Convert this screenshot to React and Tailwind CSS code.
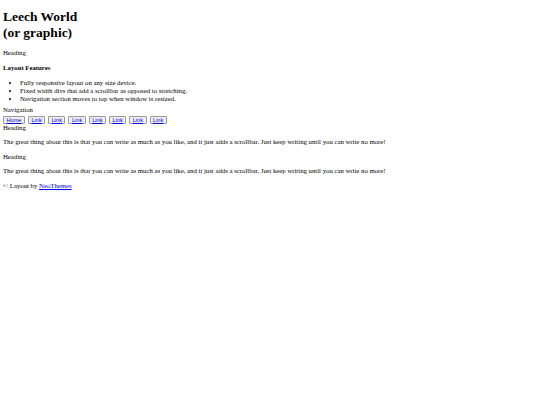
import React from "react";

function NavButton({ label }) {
  return (
    <span className="inline-flex items-center justify-center h-[8px] px-[2.5px] bg-[#efefef] border border-[#9a9a9a] rounded-[1px] font-['Liberation_Sans',sans-serif] text-[5.6px] leading-[6px]">
      <a href="#" className="text-[#0000ee] underline">{label}</a>
    </span>
  );
}

export default function App() {
  const text =
    "The great thing about this is that you can write as much as you like, and it just adds a scrollbar. Just keep writing until you can write no more!";
  return (
    <div className="min-h-[405px] bg-white p-[3px] font-['Liberation_Serif',serif] text-[6.75px] leading-[8px] text-black">
      <h1 className="mt-[6px] mb-[8px] text-[13.5px] leading-[16px] font-bold">
        Leech World
        <br />
        (or graphic)
      </h1>
      <div>Heading</div>
      <p className="mt-[7px] font-bold">Layout Features</p>
      <ul className="mt-[7px] list-disc pl-[17px]">
        <li className="leading-[8px]">Fully responsive layout on any size device.</li>
        <li className="leading-[8px]">Fixed width divs that add a scrollbar as opposed to stretching.</li>
        <li className="leading-[8px]">Navigation section moves to top when window is resized.</li>
      </ul>
      <div className="mt-[3px]">Navigation</div>
      <div className="mt-[1.5px] flex gap-[3px]">
        <NavButton label="Home" />
        <NavButton label="Link" />
        <NavButton label="Link" />
        <NavButton label="Link" />
        <NavButton label="Link" />
        <NavButton label="Link" />
        <NavButton label="Link" />
        <NavButton label="Link" />
      </div>
      <div>Heading</div>
      <p className="mt-[6.5px]">{text}</p>
      <div className="mt-[6.5px]">Heading</div>
      <p className="mt-[6.5px]">{text}</p>
      <p className="mt-[6.5px]">
        © Layout by{" "}
        <a href="#" className="text-[#0000ee] underline">NeoThemes</a>
      </p>
    </div>
  );
}
